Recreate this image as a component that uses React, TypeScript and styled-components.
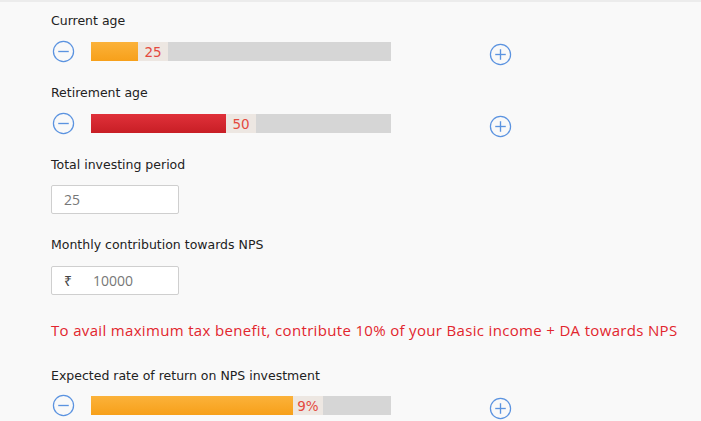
import React from "react";
import styled, { createGlobalStyle } from "styled-components";

const GlobalStyle = createGlobalStyle`
  html, body {
    margin: 0;
    padding: 0;
    background: #f9f9f9;
  }
`;

const Page = styled.div`
  width: 701px;
  height: 421px;
  overflow: hidden;
  box-sizing: border-box;
  background: #f9f9f9;
  border-top: 2px solid #ececec;
  padding: 11px 0 0 51px;
  font-family: "DejaVu Sans", Verdana, sans-serif;
`;

const Label = styled.div<{ $top?: number }>`
  font-size: 12.5px;
  line-height: 16px;
  color: #222;
  margin-top: ${(p) => p.$top ?? 0}px;
`;

const SliderRow = styled.div<{ $top?: number }>`
  display: flex;
  align-items: center;
  height: 24px;
  margin-top: ${(p) => p.$top ?? 0}px;
`;

const IconButton = styled.button<{ $drop?: number }>`
  width: 24px;
  height: 24px;
  padding: 0;
  margin: ${(p) => p.$drop ?? 0}px 0 0 0;
  border: none;
  background: none;
  display: flex;
  align-items: center;
  justify-content: center;
`;

const Track = styled.div`
  display: flex;
  width: 300px;
  height: 19px;
  margin: 0 97px 0 16px;
  background: #d6d6d6;
`;

const Fill = styled.div<{ $color: string }>`
  height: 100%;
  background: ${(p) => p.$color};
`;

const Thumb = styled.div`
  width: 30px;
  height: 100%;
  background: #ede7e2;
  color: #e44a3e;
  font-size: 13.5px;
  line-height: 21px;
  text-align: center;
`;

const InputBox = styled.div<{ $top?: number }>`
  display: flex;
  align-items: center;
  box-sizing: border-box;
  width: 128px;
  height: 29px;
  margin-top: ${(p) => p.$top ?? 0}px;
  padding-left: 12px;
  background: #fff;
  border: 1px solid #cfcfcf;
  border-radius: 2px;
  font-family: "Open Sans", sans-serif;
  font-size: 14px;
  color: #777;
`;

const Rupee = styled.span`
  width: 29px;
  color: #444;
`;

const Notice = styled.div`
  margin-top: 25px;
  font-family: "Open Sans", sans-serif;
  font-size: 15px;
  line-height: 20px;
  letter-spacing: 0.33px;
  color: #e2262e;
  white-space: nowrap;
`;

const Minus = () => (
  <svg width="23" height="23" viewBox="0 0 24 24" fill="none">
    <circle cx="12" cy="12" r="10.5" stroke="#5b93e0" strokeWidth="1.3" />
    <line x1="6.5" y1="12" x2="17.5" y2="12" stroke="#5b93e0" strokeWidth="1.4" />
  </svg>
);

const Plus = () => (
  <svg width="23" height="23" viewBox="0 0 24 24" fill="none">
    <circle cx="12" cy="12" r="10.5" stroke="#5b93e0" strokeWidth="1.3" />
    <line x1="6.5" y1="12" x2="17.5" y2="12" stroke="#5b93e0" strokeWidth="1.4" />
    <line x1="12" y1="6.5" x2="12" y2="17.5" stroke="#5b93e0" strokeWidth="1.4" />
  </svg>
);

const orange = "linear-gradient(#fbb23a, #f7a01a)";
const red = "linear-gradient(#e0313a, #c81e25)";

const Slider = ({
  fill,
  color,
  value,
  top,
}: {
  fill: number;
  color: string;
  value: string;
  top?: number;
}) => (
  <SliderRow $top={top}>
    <IconButton>
      <Minus />
    </IconButton>
    <Track>
      <Fill $color={color} style={{ width: fill }} />
      <Thumb>{value}</Thumb>
    </Track>
    <IconButton $drop={6}>
      <Plus />
    </IconButton>
  </SliderRow>
);

export default function App() {
  return (
    <Page>
      <GlobalStyle />
      <Label>Current age</Label>
      <Slider top={10} fill={47} color={orange} value="25" />

      <Label $top={22}>Retirement age</Label>
      <Slider top={10} fill={135} color={red} value="50" />

      <Label $top={22}>Total investing period</Label>
      <InputBox $top={12}>25</InputBox>

      <Label $top={23}>Monthly contribution towards NPS</Label>
      <InputBox $top={13}>
        <Rupee>₹</Rupee>10000
      </InputBox>

      <Notice>
        To avail maximum tax benefit, contribute 10% of your Basic income + DA
        towards NPS
      </Notice>

      <Label $top={28}>Expected rate of return on NPS investment</Label>
      <Slider top={9} fill={202} color={orange} value="9%" />
    </Page>
  );
}
